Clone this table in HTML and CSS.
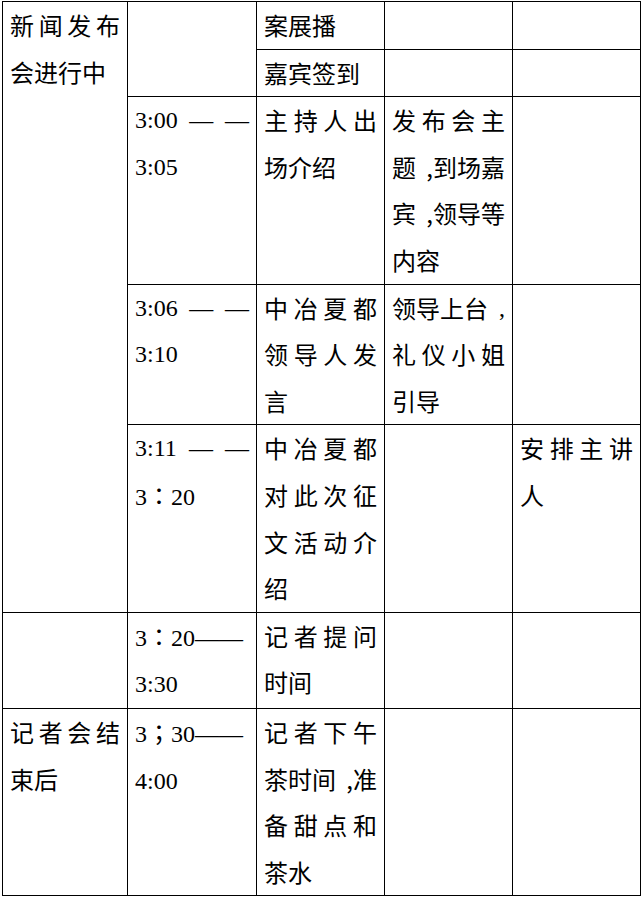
FILE: index.html
```html
<!DOCTYPE html>
<html lang="zh-CN">
<head>
<meta charset="utf-8">
<title>新闻发布会流程</title>
<link rel="stylesheet" href="styles.css">
</head>
<body>
<table class="schedule">
  <colgroup>
    <col class="c1"><col class="c2"><col class="c3"><col class="c4"><col class="c5">
  </colgroup>
  <tr>
    <td rowspan="5"><span class="ln j">新闻发布</span><span class="ln">会进行中</span></td>
    <td rowspan="2"></td>
    <td><span class="ln">案展播</span></td>
    <td></td>
    <td></td>
  </tr>
  <tr>
    <td><span class="ln">嘉宾签到</span></td>
    <td></td>
    <td></td>
  </tr>
  <tr>
    <td class="num"><span class="ln j">3:00 — —</span><span class="ln">3:05</span></td>
    <td><span class="ln j">主持人出</span><span class="ln">场介绍</span></td>
    <td><span class="ln j">发布会主</span><span class="ln sb"><span>题</span><span>,到场嘉</span></span><span class="ln sb"><span>宾</span><span>,领导等</span></span><span class="ln">内容</span></td>
    <td></td>
  </tr>
  <tr>
    <td class="num"><span class="ln j">3:06 — —</span><span class="ln">3:10</span></td>
    <td><span class="ln j">中冶夏都</span><span class="ln j">领导人发</span><span class="ln">言</span></td>
    <td><span class="ln sb"><span>领导上台</span><span class="comma">,</span></span><span class="ln j">礼仪小姐</span><span class="ln">引导</span></td>
    <td></td>
  </tr>
  <tr>
    <td class="num"><span class="ln j">3:11 — —</span><span class="ln">3<span class="fw">：</span>20</span></td>
    <td><span class="ln j">中冶夏都</span><span class="ln j">对此次征</span><span class="ln j">文活动介</span><span class="ln">绍</span></td>
    <td></td>
    <td><span class="ln j">安排主讲</span><span class="ln">人</span></td>
  </tr>
  <tr>
    <td></td>
    <td class="num"><span class="ln">3<span class="fw">：</span>20——</span><span class="ln">3:30</span></td>
    <td><span class="ln j">记者提问</span><span class="ln">时间</span></td>
    <td></td>
    <td></td>
  </tr>
  <tr>
    <td><span class="ln j">记者会结</span><span class="ln">束后</span></td>
    <td class="num"><span class="ln">3<span class="fw">；</span>30——</span><span class="ln">4:00</span></td>
    <td><span class="ln j">记者下午</span><span class="ln sb"><span>茶时间</span><span>,准</span></span><span class="ln j">备甜点和</span><span class="ln">茶水</span></td>
    <td></td>
    <td></td>
  </tr>
</table>
</body>
</html>
```
FILE: styles.css
```css
html, body {
  margin: 0;
  background: #fff;
}
body {
  padding: 1px 0 0 2px;
}
.schedule {
  border-collapse: collapse;
  table-layout: fixed;
  width: 639px;
  font-family: "Noto Sans CJK SC", sans-serif;
  font-size: 24px;
  line-height: 46.6px;
  color: #000;
}
.c1 { width: 125px; }
.c2 { width: 129px; }
.c3, .c4, .c5 { width: 128px; }
.schedule td {
  border: 1px solid #000;
  padding: 0 7px;
  vertical-align: top;
}
.ln {
  display: block;
  white-space: nowrap;
}
.j {
  text-align: justify;
  text-align-last: justify;
}
.sb {
  display: flex;
  justify-content: space-between;
}
.schedule td.num {
  font-family: "Liberation Serif", "Times New Roman", serif;
}
.fw {
  font-family: "Noto Sans CJK TC", "Noto Sans CJK JP", sans-serif;
}
.comma {
  font-family: "Liberation Serif", serif;
}
```
